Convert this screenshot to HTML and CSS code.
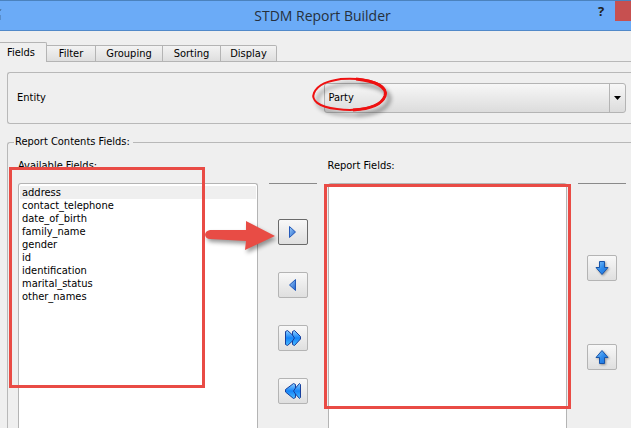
FILE: index.html
```html
<!DOCTYPE html>
<html lang="en">
<head>
<meta charset="utf-8">
<title>STDM Report Builder</title>
<link rel="stylesheet" href="styles.css">
</head>
<body>
<svg class="defs" width="0" height="0" aria-hidden="true">
  <defs>
    <linearGradient id="blue" x1="0" y1="0" x2="1" y2="1"><stop offset="0" stop-color="#9fd0fb"/><stop offset="1" stop-color="#1c5fcb"/></linearGradient>
    <linearGradient id="arrow-blue" x1="0" y1="0" x2="1" y2="1"><stop offset="0" stop-color="#8cc8fa"/><stop offset=".5" stop-color="#2f8cec"/><stop offset="1" stop-color="#1c6fdb"/></linearGradient>
    <linearGradient id="bright" x1="0" y1="0" x2="0" y2="1"><stop offset="0" stop-color="#8fd0ff"/><stop offset=".5" stop-color="#1484f8"/><stop offset="1" stop-color="#49bbff"/></linearGradient>
  </defs>
</svg>
<header class="titlebar">
  <svg class="app-icon" width="2" height="12" viewBox="0 0 2 12" aria-hidden="true"><path d="M0 2L1 0M0 6v5" stroke="#47719f"/></svg>
  <h1>STDM Report Builder</h1>
  <button class="help" type="button">?</button>
  <button class="close" type="button" aria-label="Close"></button>
</header>
<nav class="tabs" role="tablist">
  <button class="tab active" type="button" role="tab" aria-selected="true">Fields</button>
  <button class="tab filter" type="button" role="tab">Filter</button>
  <button class="tab grouping" type="button" role="tab">Grouping</button>
  <button class="tab sorting" type="button" role="tab">Sorting</button>
  <button class="tab display" type="button" role="tab">Display</button>
</nav>
<main class="pane">
  <section class="entity">
    <label for="entity">Entity</label>
    <div class="combo">
      <select id="entity"><option>Party</option></select>
      <span class="drop"><svg width="7" height="4" viewBox="0 0 7 4" aria-hidden="true"><path d="M0 0h7L3.500 4z"/></svg></span>
      <svg class="ring" width="92" height="50" viewBox="0 0 92 50" aria-hidden="true">
        <path d="M30 6C58 4 78 11 75 23C72 34 49 39 27 36C8 34 1 27 4 20C8 11 18 8 31 6" fill="none" stroke="#ee1111" stroke-width="2"/>
        <path d="M46 6C65 8 78 14 75 23C72 31 60 36 43 37" fill="none" stroke="#ee1111" stroke-width="3"/>
      </svg>
    </div>
  </section>
  <fieldset class="contents">
    <legend>Report Contents Fields:</legend>
    <div class="columns">
      <div class="column">
        <label for="available">Available Fields:</label>
        <select id="available" class="list" size="9">
          <option class="current">address</option>
          <option>contact_telephone</option>
          <option>date_of_birth</option>
          <option>family_name</option>
          <option>gender</option>
          <option>id</option>
          <option>identification</option>
          <option>marital_status</option>
          <option>other_names</option>
        </select>
        <div class="mark mark-available"></div>
      </div>
      <div class="actions transfer">
        <button class="tool focused" type="button" aria-label="Add field"><svg width="16" height="16" viewBox="0 0 16 16"><path d="M4.500 2.500v11l6-5.500z" fill="url(#blue)" stroke="#2459b9"/></svg></button>
        <button class="tool" type="button" aria-label="Remove field"><svg width="16" height="16" viewBox="0 0 16 16"><path d="M10.500 2.500v11L4.500 8z" fill="url(#blue)" stroke="#2459b9"/></svg></button>
        <button class="tool" type="button" aria-label="Add all fields"><svg width="16" height="16" viewBox="0 0 16 16"><path d="M.5 1.500L2.500.5 7.500 5V1.500L9.500.5l6 6V9l-6 6.500-2-1V11l-5 4.500-2-1z" fill="url(#bright)" stroke="#173f9c" stroke-linejoin="round"/><path d="M7.500 5L9.500 8l-2 3" fill="none" stroke="#173f9c"/></svg></button>
        <button class="tool" type="button" aria-label="Remove all fields"><svg width="16" height="16" viewBox="0 0 16 16"><path d="M15.500 1.500L14.500.5 10.500 5V1.500L8.500.5l-8 6V9l8 6.500 2-1V11l4 4.500 1-1z" fill="url(#bright)" stroke="#173f9c" stroke-linejoin="round"/><path d="M10.500 5L8.500 8l2 3" fill="none" stroke="#173f9c"/></svg></button>
        <svg class="arrow" width="76" height="38" viewBox="0 0 76 38" aria-hidden="true"><path d="M5 12Q0 13 0 17Q1 21 5 21L41 23 40 32 70 18 41 3v9z" fill="#e84c45"/></svg>
      </div>
      <div class="column">
        <label for="report">Report Fields:</label>
        <select id="report" class="list" size="9"></select>
        <div class="mark mark-report"></div>
      </div>
      <div class="actions order">
        <button class="tool" type="button" aria-label="Move down"><svg class="shade" width="16" height="16" viewBox="0 0 16 16"><path d="M5.500 1.500h5v6h3.500L8 14.500 2 7.500h3.500z" fill="url(#arrow-blue)" stroke="#1753a8"/></svg></button>
        <button class="tool" type="button" aria-label="Move up"><svg class="shade" width="16" height="16" viewBox="0 0 16 16"><path d="M5.500 14.500h5v-6h3.500L8 1.500 2 8.500h3.500z" fill="url(#arrow-blue)" stroke="#1753a8"/></svg></button>
      </div>
    </div>
  </fieldset>
</main>
</body>
</html>
```
FILE: styles.css
```css
* { box-sizing: border-box; }
body {
  margin: 0;
  height: 100vh;
  overflow: hidden;
  display: flex;
  flex-direction: column;
  background: #efefef;
  color: #000;
  font: 11px/16px "DejaVu Sans Condensed", "Noto Sans", sans-serif;
}
button, select { font: inherit; color: inherit; margin: 0; }
button { padding: 0; }
svg { display: block; }
.defs { position: absolute; }

.titlebar {
  flex: none;
  height: 31px;
  display: flex;
  align-items: flex-start;
  background: #6babf7;
  border-top: 1px solid #4b82bd;
  border-bottom: 1px solid #5189c9;
}
.app-icon { margin-top: 8px; }
.titlebar h1 {
  flex: 1;
  margin: 0;
  padding-left: 56px;
  text-align: center;
  font: 14px/29px "Open Sans", sans-serif;
  color: #26303c;
}
.help {
  width: 28px;
  height: 20px;
  border: 0;
  background: none;
  font: bold 13px/20px "Open Sans", sans-serif;
  color: #222;
}
.close { width: 16px; height: 20px; border: 0; background: #c75050; }

.tabs {
  flex: none;
  display: flex;
  align-items: flex-end;
  height: 31px;
  box-shadow: inset 0 -1px #b8b8b8;
}
.tab {
  height: 17px;
  border: 1px solid #b4b4b4;
  border-left: 0;
  background: linear-gradient(#f3f3f3, #dedede);
  line-height: 15px;
}
.tab.active {
  width: 47px;
  height: 20px;
  padding-right: 4px;
  border-bottom: 0;
  border-radius: 0 2px 0 0;
  background: #efefef;
  line-height: 20px;
}
.filter { width: 49px; }
.grouping { width: 67px; }
.sorting { width: 58px; }
.display { width: 56px; border-radius: 0 2px 0 0; }

.pane {
  flex: 1;
  min-height: 0;
  display: flex;
  flex-direction: column;
  padding: 10px 0 0 7px;
}
.entity {
  flex: none;
  display: grid;
  grid-template-columns: 1fr 1fr;
  column-gap: 4px;
  align-items: center;
  height: 52px;
  padding: 0 5px 0 9px;
  border: 1px solid #b8b8b8;
  border-right: 0;
  border-radius: 3px 0 0 3px;
}
.combo { position: relative; }
.combo select {
  display: block;
  width: 100%;
  height: 30px;
  padding: 0 4px;
  appearance: none;
  border: 1px solid #b4b4b4;
  border-radius: 3px;
  background: linear-gradient(#f7f7f7, #dcdcdc);
}
.drop {
  position: absolute;
  inset: 1px 1px 1px auto;
  width: 16px;
  display: grid;
  place-items: center;
  border-left: 1px solid #b4b4b4;
  pointer-events: none;
}
.ring {
  position: absolute;
  left: -14px;
  top: -10px;
  filter: drop-shadow(4px 5px 2px rgba(0, 0, 0, .45));
  pointer-events: none;
}

.contents {
  flex: 1;
  min-width: 0;
  margin: 10px 0 0;
  padding: 0 5px 0 10px;
  border: 1px solid #b8b8b8;
  border-right: 0;
  border-bottom: 0;
  border-radius: 3px 0 0 0;
}
.contents legend { margin-left: -4px; padding: 0 3px 0 1px; }
.columns {
  display: grid;
  grid-template-columns: 1fr 48px 1fr 48px;
  gap: 11px;
  height: calc(100vh - 150px);
  padding-top: 8px;
}
.column { position: relative; display: flex; flex-direction: column; }
.column label { height: 25px; }
.list {
  flex: 1;
  width: 100%;
  padding: 2px 1px;
  border: 1px solid #b4b4b4;
  border-bottom: 0;
  border-radius: 3px 3px 0 0;
  background: #fff;
  outline: 0;
  overflow: hidden;
}
.list option { height: 13px; min-height: 13px; padding: 0 2px; line-height: 13px; }
.list .current { background: #efefef; }
.mark { position: absolute; border: 3px solid #e94b45; pointer-events: none; }
.mark-available { left: -9px; top: 9px; width: 196px; height: 221px; }
.mark-report { left: -4px; right: -4px; top: 26px; height: 225px; }
.actions {
  position: relative;
  display: flex;
  flex-direction: column;
  align-items: center;
  margin-top: 25px;
  border-top: 1px solid #8a8a8a;
}
.transfer { gap: 27px; padding-top: 35px; }
.order { gap: 63px; padding-top: 71px; }
.tool {
  flex: none;
  width: 30px;
  height: 26px;
  display: grid;
  place-items: center;
  border: 1px solid #b4b4b4;
  border-radius: 2px;
  background: linear-gradient(#f8f8f8, #dfdfdf);
}
.tool.focused { border-color: #6a6a6a; }
.shade { filter: drop-shadow(1px 1px 1px rgba(0, 0, 0, .35)); }
.arrow {
  position: absolute;
  left: -64px;
  top: 34px;
  filter: drop-shadow(2px 3px 2px rgba(0, 0, 0, .4));
  pointer-events: none;
}
```
